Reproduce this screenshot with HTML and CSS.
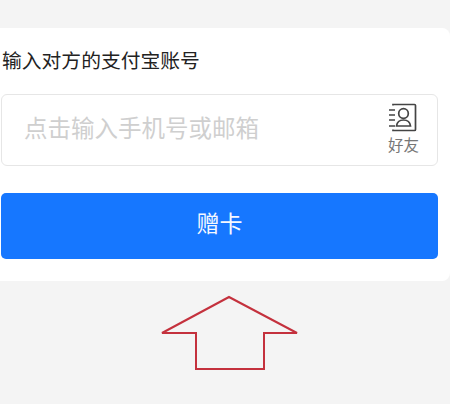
FILE: index.html
```html
<!DOCTYPE html>
<html lang="zh-CN">
<head>
  <meta charset="UTF-8" />
  <meta name="viewport" content="width=device-width, initial-scale=1.0"/>
  <title>赠卡</title>
  <link rel="stylesheet" href="styles.css">
</head>
<body>

<div class="card">
  <div class="title">输入对方的支付宝账号</div>

  <div class="account-box">
    <div class="placeholder">点击输入手机号或邮箱</div>
    <div class="friend">
      <svg class="friend-icon" width="30" height="30" viewBox="0 0 30 30" fill="none" stroke="#444" stroke-width="1.700">
        <path d="M5 3.500V2.500h21.500a1 1 0 0 1 1 1v24a1 1 0 0 1-1 1H5v-1" />
        <path d="M1 8h6M1 13h6M1 18h6M1 24h6" stroke-width="1.600" />
        <circle cx="15.500" cy="11.500" r="4.800" />
        <path d="M8.500 24c.5-4 3-6 7-6s6.500 2 7 6z" />
      </svg>
      <span class="friend-label">好友</span>
    </div>
  </div>

  <div class="give-btn">赠卡</div>
</div>

<svg class="arrow" width="140" height="76" viewBox="0 0 140 76" fill="none" stroke="#c4313d" stroke-width="2">
  <path d="M69 2 L2 38 H36 V74 H104 V38 H137 Z" />
</svg>

</body>
</html>
```

FILE: styles.css
```css
body {
  margin: 0;
  height: 404px;
  overflow: hidden;
  background-color: #f4f4f4;
  font-family: "Liberation Sans", "Noto Sans CJK SC", sans-serif;
}

.card {
  margin-top: 28px;
  height: 253px;
  box-sizing: border-box;
  padding: 20px 12px 0 1px;
  background-color: white;
  border-radius: 0 8px 8px 0;
}

.title {
  margin-left: 1px;
  font-size: 19.800px;
  line-height: 26px;
  color: #222;
}

.account-box {
  display: flex;
  align-items: center;
  justify-content: space-between;
  height: 72px;
  margin-top: 20px;
  box-sizing: border-box;
  padding: 0 18px 0 22px;
  border: 1px solid #e6e6e6;
  border-radius: 6px;
}

.placeholder {
  margin-bottom: 6px;
  font-size: 23.500px;
  color: #cfcfcf;
}

.friend {
  display: flex;
  flex-direction: column;
  align-items: center;
  gap: 4px;
  margin-bottom: 2px;
}

.friend-label {
  font-size: 15.500px;
  line-height: 20px;
  color: #777;
}

.give-btn {
  height: 66px;
  margin-top: 27px;
  border-radius: 5px;
  background-color: #1677ff;
  color: #f4f8ff;
  font-size: 23px;
  line-height: 62px;
  text-align: center;
}

.arrow {
  display: block;
  margin: 14px 0 0 160px;
}
```
